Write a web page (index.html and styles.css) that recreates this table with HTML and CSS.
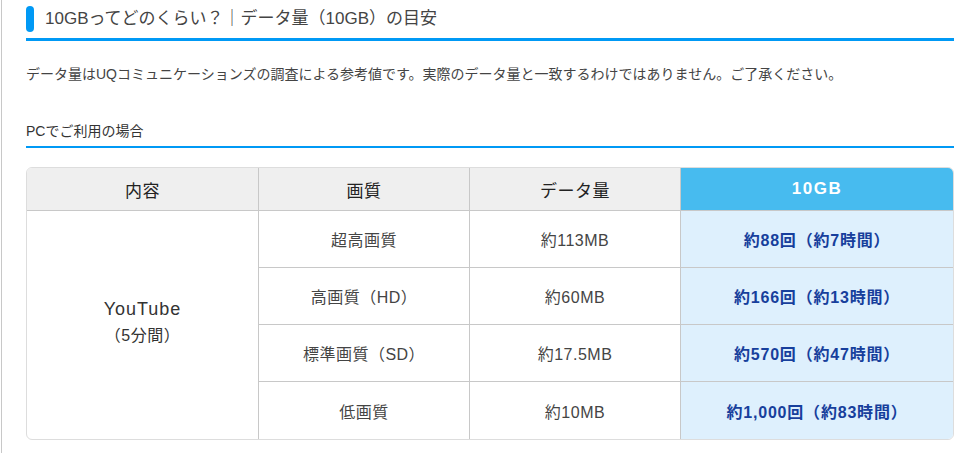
FILE: index.html
```html
<!DOCTYPE html>
<html lang="ja">

<head>
    <meta charset="UTF-8">
    <meta name="viewport" content="width=device-width, initial-scale=1.0">
    <title>10GBってどのくらい？</title>
    <link rel="stylesheet" href="styles.css">
</head>

<body>
    <div class="page">
        <h2 class="section-title"><span class="title-mark"></span>10GBってどのくらい？｜データ量（10GB）の目安</h2>
        <p class="note">データ量はUQコミュニケーションズの調査による参考値です。実際のデータ量と一致するわけではありません。ご了承ください。</p>
        <h3 class="sub-title">PCでご利用の場合</h3>
        <div class="data-table">
            <table>
                <colgroup>
                    <col class="col-content">
                    <col class="col-quality">
                    <col class="col-size">
                    <col class="col-plan">
                </colgroup>
                <thead>
                    <tr>
                        <th>内容</th>
                        <th>画質</th>
                        <th>データ量</th>
                        <th class="plan">10GB</th>
                    </tr>
                </thead>
                <tbody>
                    <tr>
                        <td class="service" rowspan="4"><span class="service-name">YouTube</span><br>（5分間）</td>
                        <td>超高画質</td>
                        <td>約113MB</td>
                        <td class="plan">約88回（約7時間）</td>
                    </tr>
                    <tr>
                        <td>高画質（HD）</td>
                        <td>約60MB</td>
                        <td class="plan">約166回（約13時間）</td>
                    </tr>
                    <tr>
                        <td>標準画質（SD）</td>
                        <td>約17.5MB</td>
                        <td class="plan">約570回（約47時間）</td>
                    </tr>
                    <tr>
                        <td>低画質</td>
                        <td>約10MB</td>
                        <td class="plan">約1,000回（約83時間）</td>
                    </tr>
                </tbody>
            </table>
        </div>
    </div>
</body>

</html>
```

FILE: styles.css
```css
* {
    box-sizing: border-box;
    margin: 0;
    padding: 0;
}

body {
    font-family: "Liberation Sans", "Noto Sans CJK JP", sans-serif;
    color: #333;
    background-color: #fff;
    padding-left: 1px;
}

.page {
    border-left: 1px solid #c8c8c8;
    min-height: 453px;
    padding: 6px 0 0 24px;
    width: 953px;
}

/* heading with blue mark */
.section-title {
    display: flex;
    align-items: center;
    gap: 11px;
    font-size: 17px;
    font-weight: normal;
    color: #444;
    line-height: 26px;
    padding-bottom: 6px;
    border-bottom: 3px solid #0099f5;
}

.title-mark {
    width: 8px;
    height: 26px;
    border-radius: 4px;
    background-color: #0099f5;
}

.note {
    font-size: 14px;
    line-height: 20px;
    margin-top: 23px;
    color: #444;
}

.sub-title {
    font-size: 14px;
    font-weight: normal;
    line-height: 20px;
    margin-top: 37px;
    padding-bottom: 5px;
    border-bottom: 2px solid #0099f5;
}

.data-table {
    margin-top: 19px;
    border: 1px solid #ddd;
    border-radius: 6px;
    overflow: hidden;
}

table {
    width: 100%;
    border-collapse: separate;
    border-spacing: 0;
    table-layout: fixed;
}

.col-content {
    width: 232px;
}

.col-quality,
.col-size {
    width: 211px;
}

th,
td {
    text-align: center;
    vertical-align: middle;
    border-right: 1px solid #c8c8c8;
    border-bottom: 1px solid #c8c8c8;
    font-size: 16px;
    letter-spacing: 0.5px;
}

th:last-child,
td:last-child {
    border-right: none;
}

tbody tr:last-child td {
    border-bottom: none;
}

th {
    height: 43px;
    background-color: #efefef;
    font-weight: normal;
    font-size: 17px;
    color: #222;
}

th.plan {
    background-color: #47bbef;
    color: #fff;
    font-weight: bold;
    letter-spacing: 1.5px;
}

td {
    height: 57px;
    color: #444;
}

td.plan {
    background-color: #def0fd;
    color: #173f9c;
    font-weight: bold;
    letter-spacing: 0.8px;
}

td.service {
    border-bottom: none;
    line-height: 26px;
    color: #333;
    padding-bottom: 5px;
}

.service-name {
    font-size: 18px;
    letter-spacing: 1px;
}
```
